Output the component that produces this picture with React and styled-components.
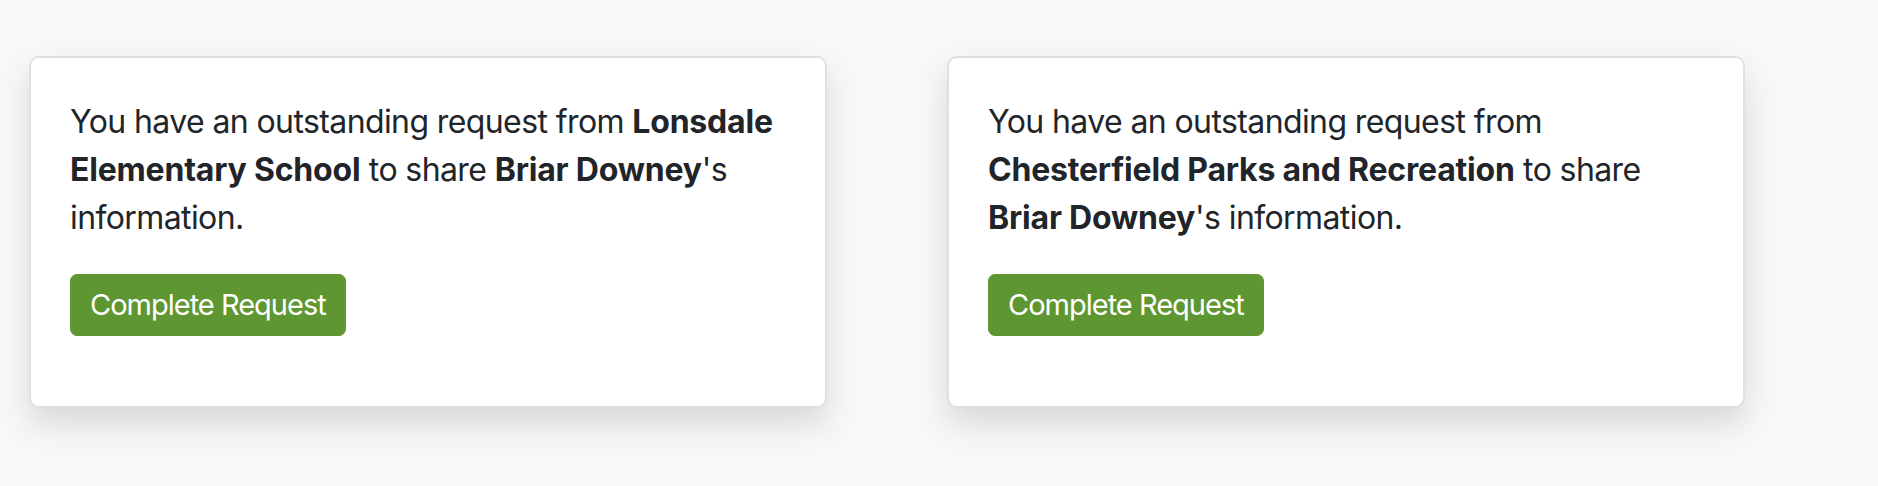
import React from 'react';
import styled, { createGlobalStyle } from 'styled-components';

const GlobalStyle = createGlobalStyle`
  html, body {
    margin: 0;
    padding: 0;
    background: #f7f8fa;
  }
  body {
    font-family: Inter, "Noto Sans", "Liberation Sans", sans-serif;
    color: #212529;
  }
`;

const requests = [
  { id: 1, org: 'Lonsdale Elementary School', child: 'Briar Downey' },
  { id: 2, org: 'Chesterfield Parks and Recreation', child: 'Briar Downey' },
];

export default function App() {
  return (
    <>
      <GlobalStyle />
      <Main>
        <CardRow>
          {requests.map(r => (
            <Card key={r.id}>
              <Message>
                You have an outstanding request from <strong>{r.org}</strong> to share{' '}
                <strong>{r.child}</strong>'s information.
              </Message>
              <ActionButton type="button">Complete Request</ActionButton>
            </Card>
          ))}
        </CardRow>
      </Main>
    </>
  );
}

const Main = styled.main`
  min-height: 486px;
  box-sizing: border-box;
  padding: 56px 29px;
`;

const CardRow = styled.div`
  display: grid;
  grid-template-columns: 798px 798px;
  column-gap: 120px;
  align-items: start;
`;

const Card = styled.div`
  box-sizing: border-box;
  background: #fff;
  border: 2px solid #dfe0e3;
  border-radius: 10px;
  padding: 40px 39px 38px;
  box-shadow: 0 16px 32px rgba(0, 0, 0, 0.13);
  display: flex;
  flex-direction: column;
  align-items: flex-start;
`;

const Message = styled.p`
  margin: 0 0 32px;
  font-size: 32px;
  line-height: 48px;
  font-weight: 400;
  letter-spacing: -0.6px;

  strong {
    font-weight: 700;
    letter-spacing: -0.2px;
  }
`;

const ActionButton = styled.button`
  font-family: inherit;
  font-size: 29px;
  line-height: 48px;
  letter-spacing: -1px;
  padding: 6px 19px;
  margin-bottom: 32px;
  color: #fff;
  background: #5e9732;
  border: 1px solid #5e9732;
  border-radius: 7px;
  cursor: pointer;
`;
